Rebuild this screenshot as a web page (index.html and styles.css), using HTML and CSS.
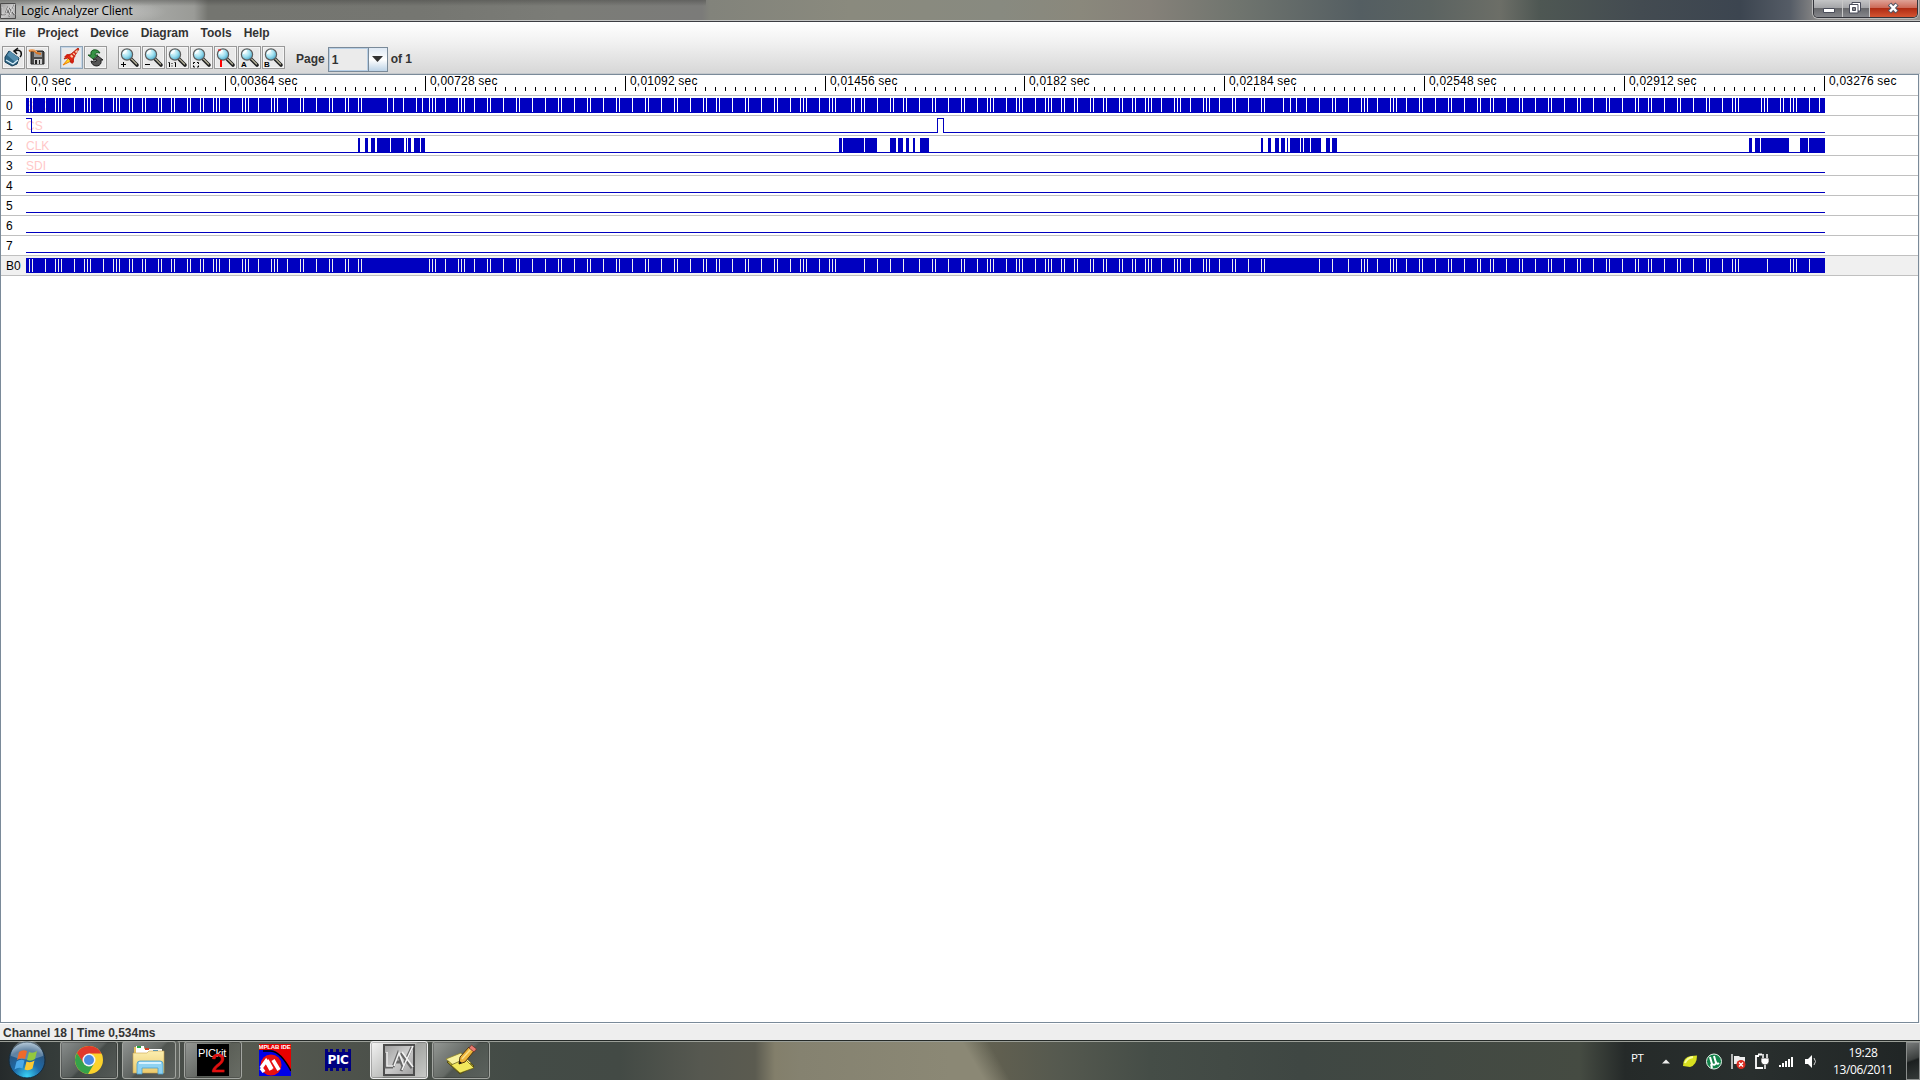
FILE: index.html
```html
<!DOCTYPE html>
<html lang="en">
<head>
<meta charset="utf-8">
<title>Logic Analyzer Client</title>
<link rel="stylesheet" href="styles.css">
</head>
<body>
<svg width="0" height="0" class="defs" aria-hidden="true">
  <defs>
    <radialGradient id="lens" cx=".35" cy=".3" r=".8"><stop offset="0" stop-color="#f4ffff"/><stop offset=".5" stop-color="#9fe0f0"/><stop offset="1" stop-color="#3a9cc0"/></radialGradient>
    <radialGradient id="orb" cx=".5" cy=".95" r=".95"><stop offset="0" stop-color="#39d3f5"/><stop offset=".4" stop-color="#1d6aa8"/><stop offset=".75" stop-color="#2a557f"/><stop offset="1" stop-color="#a9bfd0"/></radialGradient>
    <linearGradient id="folder" x2="0" y2="1"><stop offset="0" stop-color="#fbeeb0"/><stop offset="1" stop-color="#ecca6c"/></linearGradient>
    <linearGradient id="metal" x2="1" y2="1"><stop offset="0" stop-color="#999"/><stop offset=".5" stop-color="#ccc"/><stop offset="1" stop-color="#999"/></linearGradient>
  </defs>
  <symbol id="glass" viewBox="0 0 21 21">
    <path d="M12.500 12.500l5.500 5.500" stroke="#222" stroke-width="3.600" stroke-linecap="round"/>
    <path d="M12.500 12l5 5" stroke="#b5b29a" stroke-width="1.300" stroke-linecap="round"/>
    <circle cx="8" cy="7.500" r="5.600" fill="url(#lens)" stroke="#5d5d5d" stroke-width="1.200"/>
    <path d="M4.500 7a3.800 3.800 0 0 1 3.500-3.300" stroke="#fff" stroke-width="1.300" fill="none"/>
  </symbol>
  <symbol id="lax" viewBox="0 0 32 32">
    <path d="M0 0h32v32H0z" fill="url(#metal)"/>
    <path d="M1 1h30v30H1z" fill="none" stroke="#4c4c4c" stroke-width="2"/>
    <path d="M3 9v14h7M10 23l5-13 5 13M12 18h7M18 9l11 15M29 3L18 27" fill="none" stroke="#666" stroke-width="3"/>
    <path d="M4 8v14h6M11 22l5-13 5 13M19 8l11 15M30 2L19 26" fill="none" stroke="#f2f2f2" stroke-width="1.600"/>
  </symbol>
</svg>

<header class="titlebar">
  <svg class="app-icon"><use href="#lax"/></svg>
  <h1 class="window-title">Logic Analyzer Client</h1>
  <div class="window-controls">
    <span class="control minimize"><svg width="28" height="17"><path d="M9.500 8.500h11v4h-11z" fill="#fff" stroke="#4a4d5a"/></svg></span>
    <span class="control restore"><svg width="26" height="17"><path d="M9 2.500h8.500v8.500H9z" fill="#fff" stroke="#4a4d5a"/><path d="M6.500 4.500h8.500v8.500H6.500z" fill="#fff" stroke="#4a4d5a"/><path d="M9.500 7.500h3v3h-3z" fill="#888" stroke="#4a4d5a"/></svg></span>
    <span class="control close"><svg width="47" height="17"><path d="M19.500 4l7.500 8M27 4l-7.500 8" stroke="#545866" stroke-width="4.600"/><path d="M20 4.500l6.500 7M26.500 4.500l-6.500 7" stroke="#fff" stroke-width="2.500"/></svg></span>
  </div>
</header>

<section class="chrome">
  <nav class="menu">
    <span>File</span><span>Project</span><span>Device</span><span>Diagram</span><span>Tools</span><span>Help</span>
  </nav>
  <div class="toolbar">
    <div class="group">
      <button class="tool"><svg viewBox="0 0 21 21"><path d="M2 10l4-6 10 7-2 6-5 2-7-4z" fill="#2d6585" stroke="#163c55"/><path d="M4 8l3-4 9 7-4 4z" fill="#568eae"/><path d="M3 13l7 4 5-4" stroke="#d9eef8" fill="none" stroke-width="1.300"/><path d="M12 4q4-2 6 1 1 3-1 5M15 1l-4 3 3 3" stroke="#111" stroke-width="1.500" fill="none"/></svg></button>
      <button class="tool"><svg viewBox="0 0 21 21"><path d="M4 4h12l1 1v12H4z" fill="#4b4b4b" stroke="#222"/><path d="M7 5h8v5H7z" fill="#999"/><path d="M7 12h8v5H7z" fill="#ccc"/><path d="M8 13h2v4H8zM12 13h1v4h-1z" fill="#222"/><path d="M2 4q5-2 8 2l4 1" stroke="#d67525" stroke-width="2.200" fill="none"/><path d="M3 3q5-1 7 2" stroke="#fac08c" fill="none"/></svg></button>
    </div>
    <div class="group">
      <button class="tool hot"><svg viewBox="0 0 21 21"><path d="M8 11l-6 7 8-4z" fill="#ffdf20" stroke="#ee7c00"/><path d="M6 8l4-1 7-6 1 1-5 8-1 5-2 1-1-3-2-2-4 1z" fill="#e22b14" stroke="#a81a08" stroke-width=".8"/><path d="M9 9l7-6 1 1-6 7z" fill="#f8cfad"/><path d="M11 7l3 3M13 5l2 2" stroke="#d62413" stroke-width="1.500"/><path d="M3 10l3-3 3 1-3 2zM11 17l2-2-1-3-2 2z" fill="#d21f10"/></svg></button>
      <button class="tool"><svg viewBox="0 0 21 21"><path d="M15 6Q13 2 8 3 5 4 6 8H3l5 4 5-4h-3q0-3 5-2z" fill="#359344" stroke="#124f1c" stroke-width=".9"/><path d="M6 14q1 5 6 5 5-1 4-6h2l-5-4-5 4h4q-1 3-6 1z" fill="#555" stroke="#161616" stroke-width=".9"/></svg></button>
    </div>
    <div class="group zooms">
      <button class="tool"><svg viewBox="0 0 21 21"><use href="#glass"/><path d="M2 17.500h5M4.500 15v5" stroke="#000"/></svg></button>
      <button class="tool"><svg viewBox="0 0 21 21"><use href="#glass"/><path d="M2 17.500h5" stroke="#000"/></svg></button>
      <button class="tool"><svg viewBox="0 0 21 21"><use href="#glass"/><path d="M1.500 15.500h1V20M7.500 15.500h1V20M5 16v1M5 18.500v1" stroke="#000" fill="none"/></svg></button>
      <button class="tool"><svg viewBox="0 0 21 21"><use href="#glass"/><path d="M2.500 17v-1.500H4M6 15.500h1.500V17M7.500 18.500V20H6M4 20H2.500v-1.500" stroke="#000" fill="none"/></svg></button>
      <button class="tool"><svg viewBox="0 0 21 21"><use href="#glass"/><path d="M6 13v7" stroke="#f00" stroke-width="2"/><path d="M3 3h3" stroke="#f00"/></svg></button>
      <button class="tool"><svg viewBox="0 0 21 21"><use href="#glass"/><text x="2" y="20" class="icon-letter">A</text></svg></button>
      <button class="tool"><svg viewBox="0 0 21 21"><use href="#glass"/><text x="1" y="20" class="icon-letter">B</text></svg></button>
    </div>
    <div class="pager">
      <label>Page</label>
      <div class="combo"><span class="value">1</span><span class="arrow"><svg width="11" height="6"><path d="M0 0h11L5.500 6z" fill="#333"/></svg></span></div>
      <label>of 1</label>
    </div>
  </div>
</section>

<main class="diagram">
  <svg class="ruler" id="ruler" width="1917" height="20"></svg>
  <div id="channels"></div>
</main>

<footer class="status">Channel 18 | Time 0,534ms</footer>

<div class="taskbar">
  <svg class="start" viewBox="0 0 40 38"><circle cx="20" cy="19" r="18" fill="url(#orb)" stroke="#142b3d"/><path d="M4 15a16 16 0 0 1 32 0q-16 7-32 0" fill="#dfeaf2" opacity=".3"/><path d="M12 11q4-3 8-1l-2 8q-4-2-8 1z" fill="#ee6a2a"/><path d="M22 11q4 2 8-1l-2 8q-4 3-8 1z" fill="#93c83e"/><path d="M9.500 20.500q4-3 8-1l-2 8q-4-2-8 1z" fill="#4ba8e8"/><path d="M19.500 20.500q4 2 8-1l-2 8q-4 3-8 1z" fill="#fbc832"/></svg>
  <div class="tasks">
    <div class="task chrome-task"><svg width="30" height="30" viewBox="0 0 30 30"><circle cx="15" cy="15" r="14" fill="#fbd22c"/><path d="M15 8.500h12.500A14 14 0 0 0 2.900 8l6.500 10.500z" fill="#e0392b"/><path d="M2.900 8A14 14 0 0 0 14 29l6.500-11-5 3-6-3z" fill="#36a24a"/><circle cx="15" cy="15" r="6.500" fill="#f4f4f4"/><circle cx="15" cy="15" r="5" fill="#4a8be0"/></svg></div>
    <div class="task stacked"><svg width="36" height="32" viewBox="0 0 36 32"><path d="M3 3h10l2 3h16v22H3z" fill="#e3bf62"/><path d="M5 2h8v3h18v5H5z" fill="#fff"/><path d="M6 2h4v2H6z" fill="#25a545"/><path d="M14 4h4v2h-4z" fill="#d33b25"/><path d="M22 6h5v2h-5z" fill="#3290d8"/><path d="M2 9h14l2-2h15v22H2z" fill="url(#folder)" stroke="#c9a24c" stroke-width=".6"/><path d="M6 30V20q0-3 3-3h20q3 0 3 3v10h-5v-6H11v6z" fill="#8ed2f2" stroke="#4c9ec9" stroke-width=".8"/><path d="M8 19h22" stroke="#d7f2ff" stroke-width="2"/></svg></div>
    <div class="task pickit"><div class="pickit-icon"><span class="pk">PICkit</span><span class="two">2</span></div></div>
    <div class="pinned"><div class="mplab-icon"><span>MPLAB IDE</span><svg width="32" height="26" viewBox="0 0 32 26"><path d="M0 0h12Q22 1 32 22v4H0z" fill="#0000e8"/><path d="M4 1h8Q22 2 32 21" fill="none" stroke="#000" stroke-width="1.500"/><circle cx="12" cy="15" r="10.500" fill="#e81010"/><path d="M2 18l5-7 5 9M8 10l5 9M14 10l6 10M2 18l3 4" stroke="#fff" stroke-width="3.600" fill="none"/></svg></div></div>
    <div class="pinned pic"><div class="pic-icon">PIC</div></div>
    <div class="task active"><svg width="32" height="32"><use href="#lax"/></svg></div>
    <div class="task"><svg width="32" height="32" viewBox="0 0 32 32"><path d="M2 18l15-6 12 10-14 8z" fill="#b8a92c" stroke="#4b4410"/><path d="M1 15l15-6 10 10-13 6z" fill="#f7f19c" stroke="#8a7e20" stroke-width=".7"/><path d="M6 21l14-6 9 9-14 5z" fill="#f2e85c" stroke="#5b5314" stroke-width=".7"/><path d="M14 20l1-7L24 3l5 4-9 11z" fill="#eeb43a" stroke="#54370d"/><path d="M17 15l9-10" stroke="#fbe08a" stroke-width="1.500"/><path d="M24 4l2.500-3 5 4-2.500 3z" fill="#e87b70" stroke="#6b2a20" stroke-width=".7"/><path d="M14 20l.5-3 2.500 2z" fill="#111"/></svg></div>
  </div>
  <div class="tray">
    <span class="lang">PT</span>
    <svg class="tray-icons" width="160" height="20" viewBox="0 0 160 20">
      <path d="M2 12.500l4-4 4 4z" fill="#eee"/>
      <path d="M23 15Q23 6 31 5l6-.5Q37 14 30 16z" fill="#d8e020"/><path d="M25 12q2-5 8-6" stroke="#f8ff9c" stroke-width="2" fill="none"/>
      <circle cx="54" cy="10.500" r="7.500" fill="#13824a" stroke="#e8f4ec"/><path d="M50 6l2 7q3 2 4-1l-2-7M56 11q1 3 3 1M51 13l1 4" stroke="#fff" stroke-width="2" fill="none"/>
      <path d="M72 3v15" stroke="#fff" stroke-width="1.300"/><path d="M74 5h5l1 1h5v8h-6l-1-1h-4z" fill="#eee"/><circle cx="81" cy="13.500" r="4.500" fill="#d92b20"/><path d="M79 11.500l4 4M83 11.500l-4 4" stroke="#fff" stroke-width="1.400"/>
      <path d="M103 17h-7V5h3M98 3.500h4" stroke="#fff" stroke-width="1.800" fill="none"/><path d="M101 7h8v4q-1 3-4 3t-4-3z" fill="#fff" stroke="#222" stroke-width=".7"/><path d="M103 3v4M107 3v4M105 14v4" stroke="#fff" stroke-width="1.500"/>
      <path d="M119 16h2v-2h-2zM122 16h2v-4h-2zM125 16h2v-6h-2zM128 16h2V8h-2zM131 16h2V6h-2z" fill="#fff"/>
      <path d="M145 8h3l4-4v13l-4-4h-3z" fill="#fff"/><path d="M154 7q3 3.500 0 7" stroke="#ccc" fill="none"/>
    </svg>
    <div class="clock"><span>19:28</span><span>13/06/2011</span></div>
    <div class="show-desktop"></div>
  </div>
</div>
<script src="diagram.js"></script>
</body>
</html>
```
FILE: styles.css
```css
* { box-sizing: border-box; }
html, body { margin: 0; width: 1920px; height: 1080px; overflow: hidden; }
body { display: flex; flex-direction: column; background: #eee; font-family: "Liberation Sans", Arial, sans-serif; font-size: 12px; color: #333; }
svg { display: block; }
.defs { position: absolute; }

.titlebar {
  height: 22px; display: flex; align-items: flex-start; border-bottom: 1px solid #3c3d42; box-shadow: inset 0 -1px #c4c5c4;
  background:
    linear-gradient(180deg, rgba(60,60,58,.4) 0, rgba(60,60,58,0) 6px) 0 0 / 706px 21px no-repeat,
    radial-gradient(ellipse 90px 14px at 77px 12px, rgba(225,225,225,.75), rgba(225,225,225,0)),
    linear-gradient(90deg, #a2a4a1 0, #a9aaa7 80px, #a6a7a4 150px, #9a9b97 194px, #747570 208px, #757671 420px, #7b7c77 560px, #7b7b79 702px, #82837b 710px, #8a8a7e 850px, #888a80 1000px, #8a887c 1080px, #858179 1150px, #6f746e 1240px, #545e62 1360px, #5b6361 1430px, #6c6e67 1500px, #4e5753 1540px, #434b51 1640px, #3c4550 1740px, #555c66 1790px, #8f8d8b 1820px, #96938f 1920px);
}
.app-icon { width: 16px; height: 16px; margin-top: 3px; }
.window-title { margin: 3px 0 0 5px; font: 400 12px/16px "Open Sans", sans-serif; letter-spacing: -.16px; color: #000; white-space: nowrap; }
.window-controls { margin-left: auto; margin-right: 2px; display: flex; height: 18px; border: 1px solid #33343a; border-top: 0; border-radius: 0 0 5px 5px; box-shadow: 0 0 0 1px #bbb; overflow: hidden; }
.control { background: linear-gradient(#c4c5c6 0, #a5a6a9 45%, #68696c 50%, #85868b 100%); border-right: 1px solid #c8c8c8; }
.close { border: 0; background: linear-gradient(#dfa296 0, #cd6a58 45%, #b02c13 50%, #d45432 100%); }

.chrome { height: 52px; background: linear-gradient(#fff, #f1f1f1 40%, #d9d9d9 96%); border-bottom: 1px solid #c4c8cc; }
.menu { display: flex; gap: 12px; height: 24px; font: bold 12px/11px "Liberation Sans", Arial, sans-serif; align-items: flex-start; padding: 6px 5px 0; letter-spacing: -.02px; }
.toolbar { display: flex; align-items: flex-start; padding-left: 2px; }
.group { display: flex; gap: 1px; margin-right: 11px; }
.zooms { margin-right: 11px; }
.tool { width: 23px; height: 23px; padding: 0; border: 1px solid #999; background: #e9e9e9; box-shadow: inset 0 0 0 1px #f5f5f5; }
.tool svg { width: 21px; height: 21px; }
.tool.hot { border-color: #8fa3b5; box-shadow: inset 0 0 0 1px #c5d6e8; }
.icon-letter { font: bold 8px "Liberation Sans", sans-serif; fill: #000; }
.pager { display: flex; align-items: center; font: bold 12px/26px "Liberation Sans", Arial, sans-serif; gap: 3px; }
.combo { display: flex; width: 60px; height: 25px; border: 1px solid #7a8a99; }
.combo .value { width: 39px; padding-left: 3px; line-height: 24px; box-shadow: inset 0 0 0 1px #b8cfe5; background: #ebebeb; }
.combo .arrow { flex: 1; display: flex; align-items: center; justify-content: center; border-left: 1px solid #7a8a99; background: linear-gradient(#dfe9f4, #fff 50%, #bcd2e6); }

.diagram { height: 949px; margin-right: 1px; background: #fff; border: 1px solid #7a8a99; font-size: 12px; color: #000; }
.ruler { height: 20px; }
.ruler text { font: 12px "Liberation Sans", Arial, sans-serif; letter-spacing: .2px; }
#channels { border-top: 1px solid #c0c0c0; }
.channel { display: flex; height: 20px; border-bottom: 1px solid #c0c0c0; }
.channel.bus { background: #f0f0f0; }
.channel-id { width: 25px; padding-left: 5px; line-height: 20px; }
.channel-wave text { font: 12px "Liberation Sans", Arial, sans-serif; fill: #ffc8c8; }

.status { height: 17px; background: #eee; border-top: 1px solid #fff; padding-left: 3px; font: bold 12px/18px "Liberation Sans", Arial, sans-serif; }

.taskbar {
  height: 40px; display: flex; align-items: flex-start; border-top: 1px solid #252a28; box-shadow: inset 0 1px #9b9f98;
  background:
    linear-gradient(60deg, #8b8875 35%, rgba(139,136,117,0) 62%) 950px 0 / 75px 39px no-repeat,
    linear-gradient(90deg, #252a2b 0, #343b39 50px, #484d48 180px, #555950 245px, #4a4f49 400px, #434b46 520px, #434a45 620px, #565850 700px, #5b5b50 755px, #837f6b 775px, #858270 800px, #8b8875 950px, #666655 955px, #605f50 1000px, #55594f 1060px, #454d47 1150px, #3f4743 1300px, #454b42 1580px, #252a29 1625px, #292f2e 1750px, #202525 1920px);
}
.start { width: 40px; height: 38px; margin-left: 7px; }
.tasks { display: flex; margin-left: 13px; gap: 4px; }
.task { width: 58px; height: 38px; display: flex; align-items: center; justify-content: center; border: 1px solid #a3a6a1; border-radius: 3px; background: linear-gradient(135deg, rgba(255,255,255,.42), rgba(255,255,255,.16) 48%, rgba(255,255,255,.05) 52%, rgba(255,255,255,.12)); box-shadow: inset 0 0 0 1px rgba(20,20,20,.25); }
.stacked { width: 54px; margin-right: 4px; box-shadow: 3px 0 0 #60645f, 4px 0 0 #a3a6a1; }
.active { background: linear-gradient(135deg, #f4f4f4, #bcbdbb 50%, #a2a4a1 52%, #c9cac8); border-color: #eee; }
.pinned { width: 58px; height: 38px; display: flex; align-items: center; justify-content: center; }
.pic { width: 60px; margin-left: 0; margin-right: -2px; }
.pickit-icon { width: 32px; height: 32px; background: #000; position: relative; }
.pk, .two { position: absolute; }
.pk { left: 1px; top: 3px; font: 11px/12px "Liberation Sans", sans-serif; color: #fff; letter-spacing: -.2px; }
.two { left: 14px; top: 7px; font: 25px/25px "Liberation Sans", sans-serif; color: #e01010; -webkit-text-stroke: .7px #e01010; }
.mplab-icon { width: 32px; height: 32px; background: #e80000; margin-left: -1px; overflow: hidden; }
.mplab-icon span { display: block; height: 6px; font: bold 6px/6px "Liberation Sans", sans-serif; color: #fff; white-space: nowrap; letter-spacing: -.1px; }
.pic-icon { width: 26px; height: 22px; font: bold 12px/16px "DejaVu Sans", sans-serif; color: #fff; text-align: center; letter-spacing: -.4px; border-block: 3px dotted #000080; background: #000080 content-box; background-clip: content-box; }

.tray { margin-left: auto; display: flex; align-items: flex-start; color: #fff; font: 12px/17px "Open Sans", sans-serif; }
.lang { font-size: 11.500px; margin-top: 8px; width: 29px; letter-spacing: -.3px; }
.tray-icons { margin-top: 10px; }
.clock { width: 86px; margin-top: 3px; display: flex; flex-direction: column; align-items: center; letter-spacing: -.35px; }
.show-desktop { width: 14px; height: 38px; margin: 1px 0 0; border: 1px solid #8a8d8c; background: linear-gradient(160deg, #777a79, #3b3f3e 45%, #1b1f1f 50%, #353a39); }
```
FILE: diagram.js
```js
const NS = 'http://www.w3.org/2000/svg';
const ORIGIN = 26, END = 1825, BLUE = '#0000c0';

function add(parent, tag, attrs, text) {
  const el = document.createElementNS(NS, tag);
  for (const k in attrs) el.setAttribute(k, attrs[k]);
  if (text) el.textContent = text;
  parent.appendChild(el);
  return el;
}

// Time scale: a labelled mark every 20 ticks
const ruler = document.getElementById('ruler');
const labels = ['0,0', '0,00364', '0,00728', '0,01092', '0,01456', '0,0182', '0,02184', '0,02548', '0,02912', '0,03276'];
for (let i = 0; i <= 180; i++) {
  const x = i ? Math.floor(ORIGIN + i * 9.99 - 0.01) - 1 : ORIGIN - 1;
  const major = i % 20 === 0;
  add(ruler, 'rect', { x, y: major ? 1 : 12, width: 1, height: major ? 15 : 4 });
  if (major) add(ruler, 'text', { x: x + 5, y: 10 }, labels[i / 20] + ' sec');
}

// Positions where a fast signal is resolvable as a low gap
const shared1 = [29,32,45,55,58,61,74,84,87,90,103,113,116,119,129,132,142,145,158,161,171,174,187,190,200,203,213,216,219,229,242,245,248,258,271,274,277,287,300,303,316,329,332,345,348,358,361];
const shared2 = [429,432,435,445,458,461,464,474,487,490,503,516,519,532,545,558,561,574,587,590,603,616,619,632,645,648,661,674,677,690,703,706,716,719,732,745,748,761,774,777,790,800,803,806,819,829,832,835];
const shared3 = [864,877,890,903,919,932,935,948,961,964,977,987,990,993,1006,1016,1019,1022,1035,1045,1048,1051,1061,1064,1074,1077,1090,1093,1103,1106,1119,1122,1132,1135,1145,1148,1151,1161,1174,1177,1180,1190,1203,1206,1209,1219,1232,1235,1248,1261,1264,1319,1332,1348,1361,1364,1367,1377,1390,1393,1396,1406,1419,1422,1435,1448,1451,1464,1477,1480,1490,1493,1506,1519,1522,1535,1548,1551,1564,1577,1580,1593,1606,1609,1622,1635,1638,1648,1651,1664,1677,1680,1693,1706,1709,1722,1732,1735,1738,1767,1790,1793,1796,1809];
const busGaps = [...shared1, ...shared2, ...shared3];
const dataGaps = [...busGaps, 387,393,403,416,422,851,854,861,893,906,1283,1290,1296,1306,1335,1761,1764,1780,1783,1819].sort((a, b) => a - b);
const clock = [[358,360],[365,368],[371,375],[377,390],[391,404],[406,407],[408,411],[414,420],[421,425],[839,842],[843,864],[865,877],[890,896],[898,903],[906,909],[913,915],[920,929],[1261,1263],[1268,1271],[1275,1279],[1281,1285],[1287,1288],[1290,1300],[1301,1303],[1304,1310],[1311,1321],[1326,1330],[1332,1337],[1749,1752],[1755,1760],[1761,1789],[1800,1808],[1809,1825]];

function blocks(gaps) {
  const out = [];
  let from = ORIGIN;
  for (const g of gaps) { out.push([from, g]); from = g + 1; }
  out.push([from, END]);
  return out;
}
const block = ([a, b]) => `M${a - ORIGIN} 2H${b - ORIGIN}V17H${a - ORIGIN}Z`;
const low = `M0 16H${END - ORIGIN}V17H0Z`;

const channels = [
  { id: '0', label: 'SDO', path: low + blocks(dataGaps).map(block).join('') },
  { id: '1', label: 'CS', path: 'M0 2H6V16H911V2H918V16H1799V17H917V3H912V17H5V3H0Z' },
  { id: '2', label: 'CLK', path: low + clock.map(block).join('') },
  { id: '3', label: 'SDI', path: low },
  { id: '4', path: low }, { id: '5', path: low }, { id: '6', path: low }, { id: '7', path: low },
  { id: 'B0', bus: true, path: low + `M0 2H${END - ORIGIN}V3H0Z` + blocks(busGaps).map(block).join('') }
];

const list = document.getElementById('channels');
for (const c of channels) {
  const row = document.createElement('div');
  row.className = 'channel' + (c.bus ? ' bus' : '');
  const id = document.createElement('span');
  id.className = 'channel-id';
  id.textContent = c.id;
  row.appendChild(id);
  const svg = add(row, 'svg', { class: 'channel-wave', width: 1800, height: 19 });
  if (c.label) add(svg, 'text', { x: 0, y: 14 }, c.label);
  add(svg, 'path', { d: c.path, fill: BLUE, 'shape-rendering': 'crispEdges' });
  list.appendChild(row);
}
```
